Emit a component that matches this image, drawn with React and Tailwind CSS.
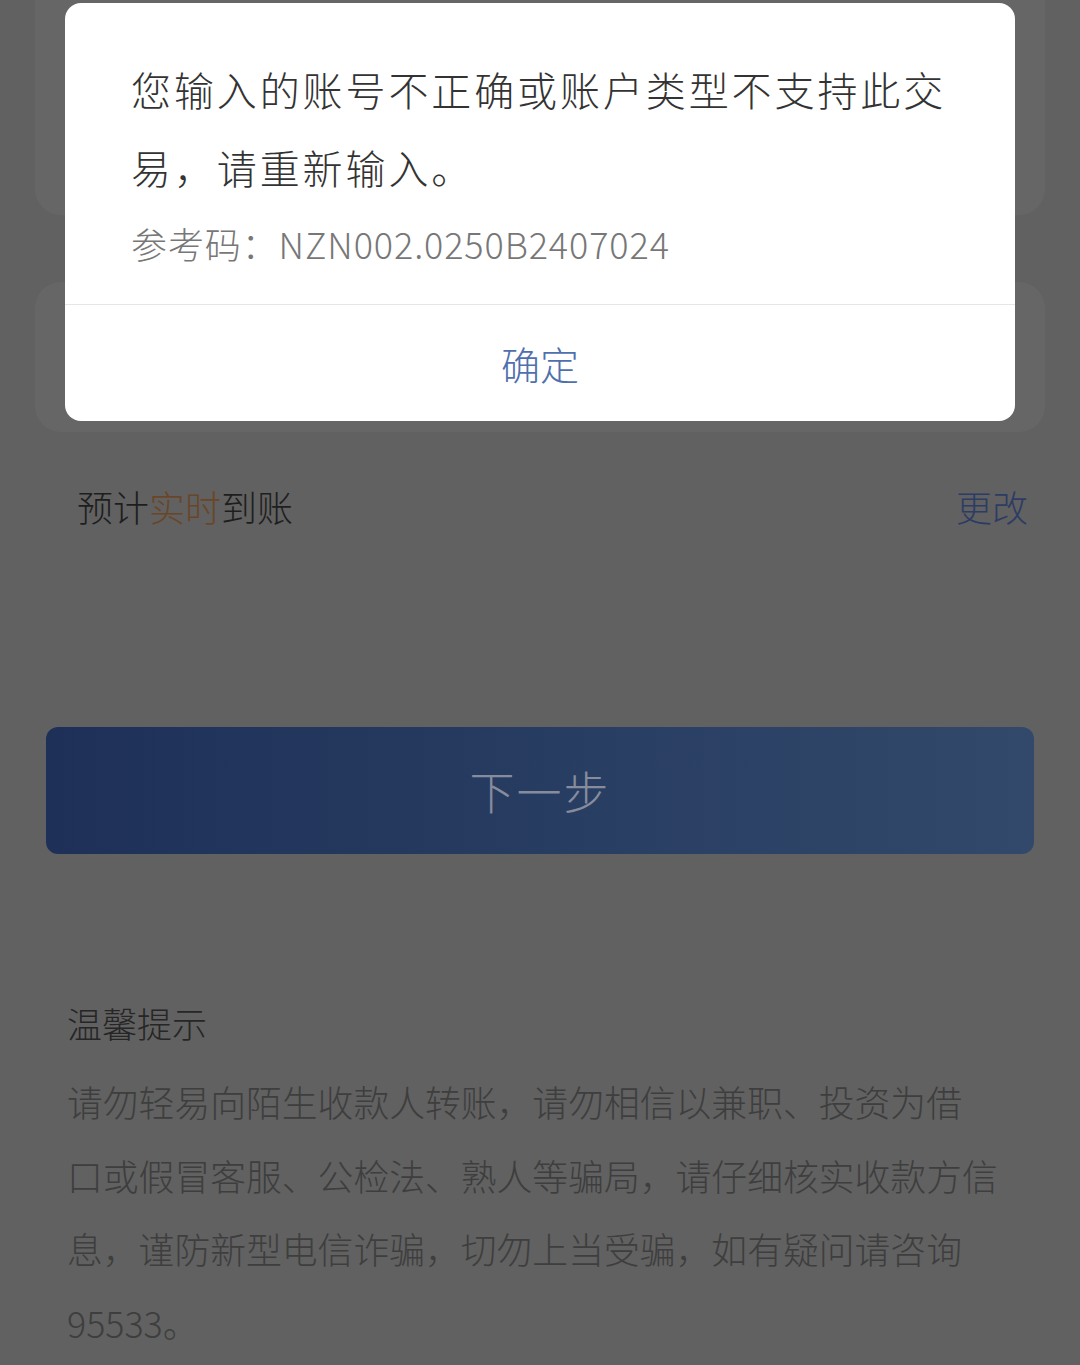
import React from "react";

const font = { fontFamily: '"Noto Sans CJK SC", "Noto Sans", sans-serif' };

function ErrorDialog() {
  return (
    <div className="absolute left-[65px] top-[3px] w-[950px] rounded-[16px] bg-white overflow-hidden">
      <div className="px-[66px] pt-[47px] pb-[36px]">
        <p className="text-[40px] leading-[78px] tracking-[2.9px] font-light text-[#333333]">
          您输入的账号不正确或账户类型不支持此交易，请重新输入。
        </p>
        <p className="mt-[12px] text-[36px] leading-[50px] tracking-[0.9px] font-light text-[#777777]">
          参考码：NZN002.0250B2407024
        </p>
      </div>
      <div className="h-px bg-[#e6e6e6]" />
      <button className="w-full h-[116px] flex items-center justify-center text-[39px] font-light text-[#4f70ad]">
        确定
      </button>
    </div>
  );
}

export default function App() {
  return (
    <div className="relative h-[1365px] w-[1080px] overflow-hidden bg-[#616161] font-light" style={font}>
      {/* page underneath the dialog */}
      <div className="mx-[35px] -mt-[40px] h-[255px] rounded-[26px] bg-[#666666]" />
      <div className="mx-[35px] mt-[67px] h-[150px] rounded-[26px] bg-[#666666]" />

      <div className="mt-[44px] h-[60px] pl-[77px] pr-[52px] flex items-center justify-between text-[36px]">
        <span className="text-[#1e1e1e]">
          预计<span className="text-[#6a4628]">实时</span>到账
        </span>
        <span className="text-[#2d3c64]">更改</span>
      </div>

      <button className="mx-[46px] mt-[191px] h-[127px] w-[988px] rounded-[12px] bg-gradient-to-r from-[#1e3058] to-[#32496b] flex items-center justify-center text-[45px] tracking-[2px] text-[#868c9c]">
        下一步
      </button>

      <div className="mt-[144px] px-[67px]">
        <h3 className="text-[35px] leading-[50px] text-[#262626]">温馨提示</h3>
        <p className="mt-[17px] text-[35.8px] leading-[73.5px] text-[#3e3e3e] whitespace-nowrap">
          请勿轻易向陌生收款人转账，请勿相信以兼职、投资为借
          <br />
          口或假冒客服、公检法、熟人等骗局，请仔细核实收款方信
          <br />
          息，谨防新型电信诈骗，切勿上当受骗，如有疑问请咨询
          <br />
          95533。
        </p>
      </div>

      <ErrorDialog />
    </div>
  );
}
